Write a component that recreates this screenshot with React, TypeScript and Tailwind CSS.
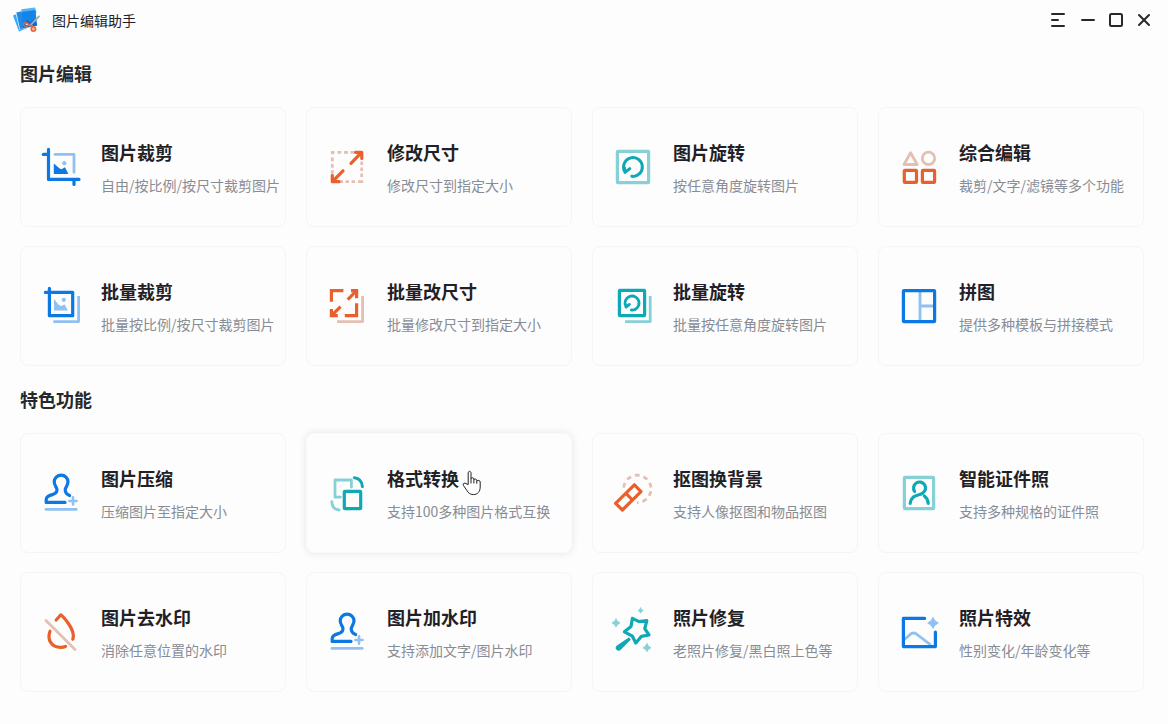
import type { ReactNode } from 'react';

const BLUE = '#0b78e3';
const SKY = '#8fc1f3';
const ORANGE = '#e9602c';
const PEACH = '#e4c0b2';
const TEAL = '#0fa9b5';
const MINT = '#87d0d6';

type IconProps = { children: ReactNode };

function Icon({ children }: IconProps) {
  return (
    <svg
      viewBox="0 0 40 40"
      className="size-10 shrink-0 overflow-visible"
      fill="none"
      strokeWidth="3.2"
      strokeLinecap="round"
      strokeLinejoin="round"
      aria-hidden="true"
    >
      {children}
    </svg>
  );
}

function Sparkle({ x, y, r, color }: { x: number; y: number; r: number; color: string }) {
  const k = r * 0.28;
  return (
    <path
      fill={color}
      stroke={color}
      strokeWidth="0.8"
      d={`M${x} ${y - r}Q${x + k} ${y - k} ${x + r} ${y}Q${x + k} ${y + k} ${x} ${y + r}Q${x - k} ${y + k} ${x - r} ${y}Q${x - k} ${y - k} ${x} ${y - r}Z`}
    />
  );
}

const CropIcon = () => (
  <Icon>
    <path stroke={SKY} strokeWidth="2.8" d="M14 7.4H33V25.3" />
    <path stroke={BLUE} d="M7.5 2.4V32.4H38M2.3 7.4H7.5M33 32.4V37.4" />
    <path fill={BLUE} d="M12.8 16.6L18.6 21.6L20.6 22.2L24 20.2L27.4 27H12.8Z" />
    <circle cx="23.3" cy="16.2" r="2.1" fill={SKY} />
  </Icon>
);

const BatchCropIcon = () => (
  <Icon>
    <path stroke={SKY} strokeWidth="2.8" strokeLinecap="butt" d="M12.3 35.6H37.6V10" />
    <path stroke={BLUE} d="M4.4 6.4H31.7V29.7H8.4V2.4" />
    <path fill={SKY} d="M13 13L17.4 18.4L20 20L23.6 18.4L27 24.4H13Z" />
    <circle cx="22.8" cy="13.8" r="2.1" fill={SKY} />
  </Icon>
);

const ResizeIcon = () => (
  <Icon>
    <path
      stroke={PEACH}
      strokeWidth="2.8"
      strokeLinecap="butt"
      d="M4.2 5.3H7.4M10.5 5.3H14.3M17 5.3H21M23.4 5.3H27M5.3 4.2V7.2M5.3 10.5V14.2M5.3 17V20.7M5.3 23.3V26.5M34.7 14.5V18M34.7 20.5V24M34.7 26.5V30M34.7 33.4V36M13 34.7H16M18.5 34.7H22M24.5 34.7H28M31 34.7H36"
    />
    <path stroke={ORANGE} d="M24 16.3L34.6 5.4M28.5 5.3H34.8V11.5M16 23.8L5.4 34.6M5.3 28.4V34.7H12" />
  </Icon>
);

const BatchResizeIcon = () => (
  <Icon>
    <path stroke={PEACH} strokeWidth="2.8" strokeLinecap="butt" d="M10 35.6H35.6V10" />
    <path
      stroke={ORANGE}
      strokeLinecap="butt"
      strokeLinejoin="miter"
      d="M4.4 15.8V4.6H16.4M29.6 17.2V29.7H17.8M20.7 13.6L29.2 5M24 4.6H29.6V12.3M13.6 20.6L5 29.2M4.4 23V29.7H10.8"
    />
  </Icon>
);

const RotateIcon = () => (
  <Icon>
    <rect x="4.4" y="4.4" width="31.2" height="31.2" rx="0.6" stroke={MINT} />
    <path stroke={TEAL} strokeWidth="3" d="M18.8 29.3A9.4 9.4 0 1 0 12 25M11.4 20.8L12 25.4L16.8 21.6" />
  </Icon>
);

const BatchRotateIcon = () => (
  <Icon>
    <path stroke={MINT} strokeWidth="2.8" strokeLinecap="butt" d="M12 35.6H37.2V10" />
    <rect x="6.4" y="4.4" width="25.2" height="25.2" rx="0.6" stroke={TEAL} />
    <path stroke={TEAL} strokeWidth="2.8" d="M18.4 24A7 7 0 1 0 13 20.6M12.2 17.8L13 21.2L16.4 18.4" />
  </Icon>
);

const ShapesIcon = () => (
  <Icon>
    <path stroke={PEACH} strokeWidth="2.8" d="M11.6 5.8L18.2 17.5H5Z" />
    <circle cx="29.5" cy="11.4" r="6.2" stroke={PEACH} strokeWidth="2.8" />
    <rect x="5.3" y="23.4" width="12.2" height="12" rx="0.6" stroke={ORANGE} />
    <rect x="23.4" y="23.4" width="12.2" height="12" rx="0.6" stroke={ORANGE} />
  </Icon>
);

const CollageIcon = () => (
  <Icon>
    <path stroke={SKY} strokeWidth="2.8" strokeLinecap="butt" d="M21 6V34M21 20H34.5" />
    <rect x="4.4" y="4.6" width="31.2" height="31" rx="0.6" stroke={BLUE} />
  </Icon>
);

const StampIcon = () => (
  <Icon>
    <path stroke={SKY} strokeWidth="2.8" d="M5 36.4H35.2" />
    <path stroke={SKY} strokeWidth="2.6" d="M32 24.4V31.6M28.4 28H35.6" />
    <path
      stroke={BLUE}
      d="M24 29.4H5.2V26.4C5.2 23.4 8 22.6 11.4 21.6C14.4 20.8 16 19.4 16 16.6C16 14.6 13.2 12.4 13.2 8.8A6.9 6.7 0 0 1 27 8.8C27 12.4 24.2 14.6 24.2 16.6C24.2 20 25.4 21.4 28.6 22.6"
    />
  </Icon>
);

const ConvertIcon = () => (
  <Icon>
    <path stroke={MINT} strokeWidth="2.8" d="M24.4 14V7H8V24.2H13.4M4.8 28.6C5 33.4 7.6 36.6 12.2 37" />
    <rect x="17.3" y="18.3" width="16.4" height="17.4" rx="0.6" stroke={TEAL} />
    <path stroke={TEAL} strokeWidth="3" d="M27.4 4.8C32.2 5.4 35 8.8 35.4 13.6" />
  </Icon>
);

const CutoutIcon = () => (
  <Icon>
    <path
      stroke={PEACH}
      strokeWidth="2.8"
      strokeLinecap="butt"
      strokeDasharray="4.8 4"
      d="M10.7 14.6A13.7 13.7 0 1 1 24 29.6"
    />
    <path stroke={ORANGE} d="M21.4 11.8L28 18.6L9.4 37L2.6 30.4ZM13 20.4L19.4 27" />
  </Icon>
);

const PortraitIcon = () => (
  <Icon>
    <rect x="5.4" y="4.4" width="29.2" height="31.2" rx="0.6" stroke={MINT} />
    <path
      stroke={TEAL}
      d="M15.6 18.4A6 6 0 1 1 23.6 20.2C21.6 22 17.4 21.4 14.4 24C12.4 25.8 11.4 28 11.2 30.4M25.4 23C27.8 24.8 29 27.4 29.2 30.4"
    />
  </Icon>
);

const DropIcon = () => (
  <Icon>
    <path
      stroke={ORANGE}
      d="M15.2 8L19.8 2.8C22.2 4.6 32 15.4 32.4 23.6C32.4 25 32.2 26 31.8 27.2M9 19.2C5.8 27.6 10.4 35.4 19.6 35.4C21.4 35.4 23.2 35.2 24.6 34.4"
    />
    <path stroke={PEACH} strokeWidth="2.8" d="M5 8.4L34 37.4" />
  </Icon>
);

const WandIcon = () => (
  <Icon>
    <path
      stroke={TEAL}
      d="M19.4 6.4L26 9.6L33.8 8.6L31.8 16.6L36 23L28.4 24.4L22.8 31L19.4 24.2L11.4 19.8L18 14.6Z"
    />
    <path fill={TEAL} stroke={TEAL} strokeWidth="1.4" d="M15.8 26.2L17 27.6L7 37.4C5 39 2.2 36.4 4 34.4Z" />
    <Sparkle x={3} y={11} r={4} color={MINT} />
    <Sparkle x={27.6} y={-1.4} r={2.6} color={MINT} />
    <Sparkle x={34} y={35.8} r={4} color={MINT} />
  </Icon>
);

const EffectIcon = () => (
  <Icon>
    <path stroke={SKY} strokeWidth="2.8" d="M6 27L11.4 22.2C13.2 20.8 15.4 20.6 17.4 22L31 32.4" />
    <path stroke={BLUE} d="M25.6 6.4H4.4V34.6H36.4V20" />
    <Sparkle x={34} y={11} r={5.4} color={SKY} />
  </Icon>
);

type Feature = { title: string; desc: string; icon: () => ReactNode; active?: boolean };

const sections: { heading: string; items: Feature[] }[] = [
  {
    heading: '图片编辑',
    items: [
      { title: '图片裁剪', desc: '自由/按比例/按尺寸裁剪图片', icon: CropIcon },
      { title: '修改尺寸', desc: '修改尺寸到指定大小', icon: ResizeIcon },
      { title: '图片旋转', desc: '按任意角度旋转图片', icon: RotateIcon },
      { title: '综合编辑', desc: '裁剪/文字/滤镜等多个功能', icon: ShapesIcon },
      { title: '批量裁剪', desc: '批量按比例/按尺寸裁剪图片', icon: BatchCropIcon },
      { title: '批量改尺寸', desc: '批量修改尺寸到指定大小', icon: BatchResizeIcon },
      { title: '批量旋转', desc: '批量按任意角度旋转图片', icon: BatchRotateIcon },
      { title: '拼图', desc: '提供多种模板与拼接模式', icon: CollageIcon },
    ],
  },
  {
    heading: '特色功能',
    items: [
      { title: '图片压缩', desc: '压缩图片至指定大小', icon: StampIcon },
      { title: '格式转换', desc: '支持100多种图片格式互换', icon: ConvertIcon, active: true },
      { title: '抠图换背景', desc: '支持人像抠图和物品抠图', icon: CutoutIcon },
      { title: '智能证件照', desc: '支持多种规格的证件照', icon: PortraitIcon },
      { title: '图片去水印', desc: '消除任意位置的水印', icon: DropIcon },
      { title: '图片加水印', desc: '支持添加文字/图片水印', icon: StampIcon },
      { title: '照片修复', desc: '老照片修复/黑白照上色等', icon: WandIcon },
      { title: '照片特效', desc: '性别变化/年龄变化等', icon: EffectIcon },
    ],
  },
];

function Pointer() {
  return (
    <svg viewBox="0 0 20 26" className="pointer-events-none absolute top-9 left-[155px] h-[26px] w-5" aria-hidden="true">
      <path
        d="M6.2 14.6V3C6.2 .8 9 .8 9 3V8.4C9.6 7.4 11.8 7.6 11.9 9V9.6C12.6 8.6 14.8 9 14.8 10.4V11C15.6 10 18.2 10.2 18.2 12V17C18.2 21.8 15.4 24.6 11.4 24.6C8 24.6 6.4 23 4.8 20.4L1.4 15.4C.4 13.4 2.6 12.4 4 13.6Z"
        fill="#fff"
        stroke="#222"
        strokeWidth="1"
        strokeLinejoin="round"
      />
      <path d="M9 8.4V13M11.9 9.6V13M14.8 11V13.4" stroke="#222" strokeWidth="1" fill="none" strokeLinecap="round" />
    </svg>
  );
}

function FeatureCard({ title, desc, icon: Glyph, active }: Feature) {
  return (
    <button
      type="button"
      className={`relative flex h-[120px] min-w-0 cursor-pointer items-center gap-5 rounded-lg border bg-[#fdfdfd] pl-5 text-left ${
        active ? 'border-[#fafafa] shadow-[0_0_8px_rgba(0,0,0,0.1)]' : 'border-[#f4f5f6]'
      }`}
    >
      <Glyph />
      <span className="flex flex-col gap-2.5 whitespace-nowrap">
        <span className="text-lg leading-[26px] font-bold text-[#1f2126]">{title}</span>
        <span className="text-sm leading-5 text-[#888c94]">{desc}</span>
      </span>
      {active && <Pointer />}
    </button>
  );
}

function Logo() {
  return (
    <svg viewBox="0 0 28 28" className="size-7 shrink-0" aria-hidden="true">
      <path fill="#3ba4f4" d="M1 9.6L17.6 3L24 18.4L7 25.4Z" />
      <path fill="#d9eefc" d="M3.4 6.4L20.4 2.6L24.8 19.8L7.4 23.8Z" />
      <path fill="#1f8ceb" d="M4.4 6.6L20.2 3L24.4 19.4L8 23.2Z" />
      <path fill="#55b4f8" d="M9.2 3.2L23 1.4L24.6 7L10 10Z" />
      <path fill="#1683e8" d="M9.6 6L23.4 4L25.2 19.6L10.6 21.6Z" />
      <path fill="#0b63c7" d="M10.6 21.2L15.4 14L18.4 16.8L21.6 13.4L25.2 19.6Z" />
      <path stroke="#9fabb9" strokeWidth="1.8" strokeLinecap="round" d="M27 10.4L18.6 19" />
      <path stroke="#dde3ea" strokeWidth="1.4" strokeLinecap="round" d="M14 18L20.8 20.4" />
      <ellipse cx="14" cy="18.4" rx="2.5" ry="1.7" fill="none" stroke="#dc6444" strokeWidth="1.4" />
      <circle cx="21.4" cy="23" r="2.2" fill="#f6b49c" stroke="#e8653b" strokeWidth="1.6" />
      <path stroke="#dc6444" strokeWidth="1.6" d="M16.2 18.2L21 20.8" />
    </svg>
  );
}

function WindowButton({ label, d, className = '' }: { label: string; d: string; className?: string }) {
  return (
    <button type="button" aria-label={label} className={`grid size-7 place-items-center ${className}`}>
      <svg viewBox="0 0 16 16" className="size-4" fill="none" stroke="#26282b" strokeWidth="2" strokeLinecap="round" strokeLinejoin="round">
        <path d={d} />
      </svg>
    </button>
  );
}

export default function App() {
  return (
    <div className="min-h-screen bg-[#fdfdfd] font-['Noto_Sans_CJK_SC',sans-serif] text-[#26282b]">
      <header className="flex h-10 items-center justify-between pr-2.5 pl-3">
        <div className="flex items-center gap-3">
          <Logo />
          <h1 className="text-sm leading-5 text-[#1f2126]">图片编辑助手</h1>
        </div>
        <div className="flex items-center">
          <WindowButton label="菜单" className="mr-0.5" d="M2 2H14M2 8H8M2 14H14" />
          <WindowButton label="最小化" d="M2 8H14" />
          <WindowButton label="最大化" d="M3.5 2H12.5Q14 2 14 3.5V12.5Q14 14 12.5 14H3.5Q2 14 2 12.5V3.5Q2 2 3.5 2Z" />
          <WindowButton label="关闭" d="M3 3L13 13M13 3L3 13" />
        </div>
      </header>
      <main className="flex flex-col gap-5 pt-5 pr-6 pb-8 pl-5">
        {sections.map((section) => (
          <section key={section.heading}>
            <h2 className="mb-[21px] text-lg leading-[26px] font-bold">{section.heading}</h2>
            <div className="grid grid-cols-4 gap-x-5 gap-y-[19px]">
              {section.items.map((item) => (
                <FeatureCard key={item.title} {...item} />
              ))}
            </div>
          </section>
        ))}
      </main>
    </div>
  );
}
